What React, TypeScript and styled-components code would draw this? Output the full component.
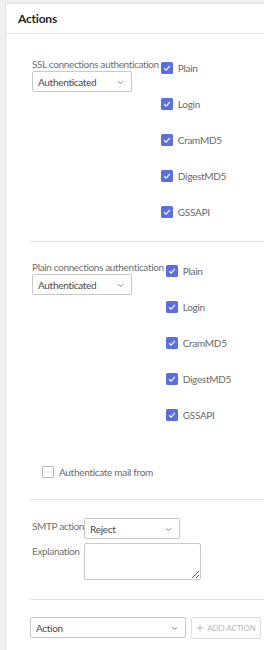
import React from 'react';
import styled, { createGlobalStyle } from 'styled-components';

const GlobalStyle = createGlobalStyle`
  html, body { margin: 0; padding: 0; background: #eef0f1; }
  body { font-family: Lato, "Open Sans", sans-serif; }
  * { box-sizing: border-box; }
`;

const Page = styled.div`
  padding: 3px 0 0 5px;
  height: 650px;
  overflow: hidden;
`;

const Card = styled.div`
  background: #fff;
  border-left: 1px solid #e1e4e6;
  border-top: 1px solid #e1e4e6;
  height: 647px;
`;

const Header = styled.div`
  height: 30px;
  display: flex;
  align-items: center;
  padding-left: 12px;
  border-bottom: 1px solid #e3e5e7;
  font-size: 12px;
  letter-spacing: -0.2px;
  font-weight: 700;
  color: #1f1f1f;
`;

const Body = styled.div`
  padding-left: 24px;
`;

const Section = styled.div<{ $top: number; $bottom: number }>`
  padding: ${p => p.$top}px 0 ${p => p.$bottom}px 2px;
`;

const Divider = styled.div`
  height: 1px;
  background: #e2e2e2;
`;

const AuthRow = styled.div`
  display: flex;
  align-items: flex-start;
`;

const LabelCol = styled.div`
  display: flex;
  flex-direction: column;
`;

const FieldLabel = styled.div`
  font-size: 10px;
  line-height: 14px;
  letter-spacing: -0.35px;
  color: #707070;
  white-space: nowrap;
`;

const SelectBox = styled.div<{ $w: number }>`
  width: ${p => p.$w}px;
  height: 21px;
  border: 1px solid #c9c9c9;
  border-radius: 2px;
  background: #fff;
  display: flex;
  align-items: center;
  justify-content: space-between;
  padding: 1px 7px 0 5px;
  font-size: 10px;
  letter-spacing: -0.3px;
  color: #4a4a4a;
`;

const CheckList = styled.div`
  display: flex;
  flex-direction: column;
  gap: 18px;
  margin: 2px 0 0 2px;
`;

const CheckRow = styled.label<{ $indent?: number }>`
  display: flex;
  align-items: center;
  gap: 5px;
  height: 18px;
  padding-left: ${p => p.$indent ?? 0}px;
  font-size: 10px;
  letter-spacing: -0.3px;
  color: #6a6a6a;
`;

const EmptyBox = styled.span`
  width: 12px;
  height: 12px;
  border: 1px solid #b5b5b5;
  border-radius: 2px;
  background: #fff;
`;

const MailFrom = styled.div`
  margin-top: 39px;
`;

const FormGrid = styled.div`
  display: grid;
  grid-template-columns: auto auto;
  justify-content: start;
  align-items: start;
  column-gap: 0;
  row-gap: 4px;
`;

const GridLabel = styled(FieldLabel)`
  padding-top: 1px;
`;

const TextArea = styled.textarea`
  width: 117px;
  height: 37px;
  border: 1px solid #c9c9c9;
  border-radius: 2px;
  resize: both;
  margin: 0;
  display: block;
  font-family: inherit;
`;

const BottomRow = styled.div`
  display: flex;
  gap: 5px;
  padding-top: 17px;
`;

const AddButton = styled.button`
  width: 70px;
  height: 22px;
  border: 1px solid #e0e0e0;
  border-radius: 2px;
  background: #fff;
  color: #b8b8b8;
  font-family: inherit;
  font-size: 8px;
  letter-spacing: -0.1px;
  display: flex;
  align-items: center;
  justify-content: center;
  gap: 3px;
  padding: 0;
`;

const Chevron = () => (
  <svg width="7" height="5" viewBox="0 0 7 5">
    <path d="M1.2 1.4 L3.5 3.4 L5.8 1.4" fill="none" stroke="#888" strokeWidth="1" />
  </svg>
);

const CheckedBox = () => (
  <svg width="12" height="12" viewBox="0 0 12 12">
    <rect x="0" y="0" width="12" height="12" rx="1.5" fill="#5a6fe0" />
    <path d="M3.2 6.3 L5.1 8.1 L8.9 3.9" fill="none" stroke="#fff" strokeWidth="1.2" />
  </svg>
);

const Plus = () => (
  <svg width="8" height="8" viewBox="0 0 8 8">
    <path d="M4 0.5 V7.5 M0.5 4 H7.5" stroke="#b8b8b8" strokeWidth="1" />
  </svg>
);

const methods = ['Plain', 'Login', 'CramMD5', 'DigestMD5', 'GSSAPI'];

const Select = ({ value, width }: { value: string; width: number }) => (
  <SelectBox $w={width}>
    <span>{value}</span>
    <Chevron />
  </SelectBox>
);

const AuthBlock = ({ label }: { label: string }) => (
  <AuthRow>
    <LabelCol>
      <FieldLabel>{label}</FieldLabel>
      <Select value="Authenticated" width={100} />
    </LabelCol>
    <CheckList>
      {methods.map(m => (
        <CheckRow key={m}>
          <CheckedBox />
          {m}
        </CheckRow>
      ))}
    </CheckList>
  </AuthRow>
);

export default function App() {
  return (
    <>
      <GlobalStyle />
      <Page>
        <Card>
          <Header>Actions</Header>
          <Body>
            <Section $top={23} $bottom={20}>
              <AuthBlock label="SSL connections authentication" />
            </Section>
            <Divider />
            <Section $top={18} $bottom={18}>
              <AuthBlock label="Plain connections authentication" />
              <MailFrom>
                <CheckRow $indent={10}>
                  <EmptyBox />
                  Authenticate mail from
                </CheckRow>
              </MailFrom>
            </Section>
            <Divider />
            <Section $top={18} $bottom={19}>
              <FormGrid>
                <GridLabel>SMTP action</GridLabel>
                <Select value="Reject" width={96} />
                <GridLabel>Explanation</GridLabel>
                <TextArea />
              </FormGrid>
            </Section>
            <Divider />
            <BottomRow>
              <Select value="Action" width={156} />
              <AddButton>
                <Plus />
                ADD ACTION
              </AddButton>
            </BottomRow>
          </Body>
        </Card>
      </Page>
    </>
  );
}
